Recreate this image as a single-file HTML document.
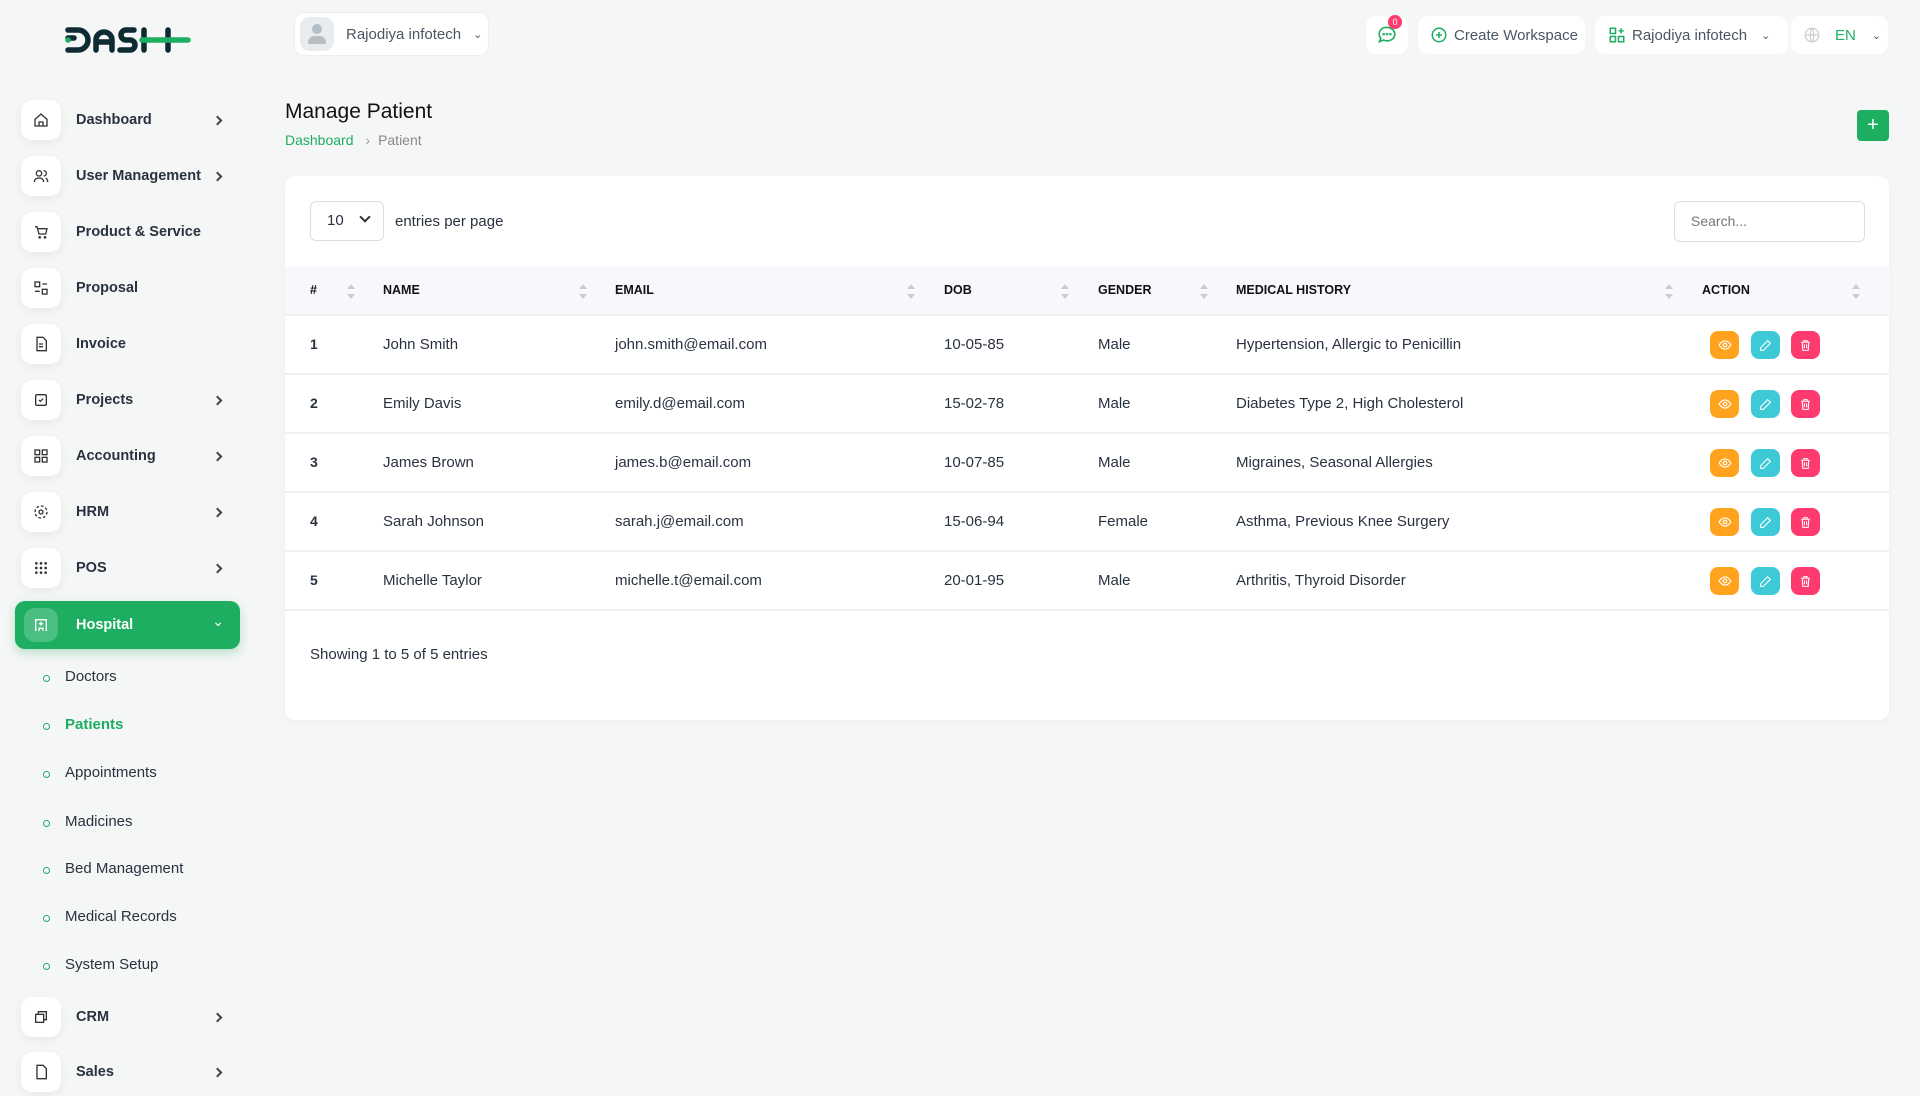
<!DOCTYPE html><html><head><meta charset="utf-8"><style>
*{box-sizing:border-box;margin:0;padding:0}
body{width:1920px;height:1080px;overflow:hidden;background:#f5f6f6;font-family:"Liberation Sans",sans-serif;color:#293240;position:relative}
.abs{position:absolute}
.logo{left:64px;top:24px}
.item{position:absolute;left:15px;width:225px;height:48px;display:flex;align-items:center}
.ic{width:40px;height:40px;border-radius:11px;background:#fff;box-shadow:0 3px 10px rgba(0,0,0,.06);display:flex;align-items:center;justify-content:center;margin-left:6px}
.item .t{margin-left:15px;font-size:14.5px;font-weight:bold;color:#293240}
.item .ch{position:absolute;right:19px;top:21px;width:7px;height:7px;border-right:2px solid #444;border-top:2px solid #444;transform:rotate(45deg)}
.act{background:#1eae62;border-radius:10px;box-shadow:0 4px 10px rgba(30,174,98,.3)}
.act .ic{background:rgba(255,255,255,.2);box-shadow:none;width:34px;height:34px;margin-left:9px}
.act .t{color:#fff;margin-left:18px}
.sub{position:absolute;left:65px;font-size:15px;color:#293240}
.sub:before{content:"";position:absolute;left:-22px;top:7px;width:5px;height:5px;border-radius:50%;border:1.5px solid #1eae62}
.btn{position:absolute;top:16px;height:38px;background:#fff;border-radius:10px;display:flex;align-items:center;font-size:15px;color:#4b5563}
.card{left:285px;top:176px;width:1604px;height:544px;background:#fff;border-radius:10px;box-shadow:0 2px 8px rgba(0,0,0,.03)}
.th{position:absolute;font-size:12.5px;font-weight:bold;color:#111;top:283px}
.srt{position:absolute;top:284px;width:8px;height:16px}
.srt:before{content:"";position:absolute;left:0;top:0;border:4px solid transparent;border-bottom:5px solid #ccc;border-top:0}
.srt:after{content:"";position:absolute;left:0;top:10px;border:4px solid transparent;border-top:5px solid #ccc;border-bottom:0}
.td{position:absolute;font-size:15px;color:#293240}
.ab{position:absolute;width:29px;height:28px;border-radius:8px;display:flex;align-items:center;justify-content:center}
.line{position:absolute;left:285px;width:1604px;height:2px;background:#eef0f2}
</style></head><body>
<svg class="abs logo" width="128" height="32" viewBox="0 0 128 32">
<path d="M4 14h6M4 6h10a10 10 0 0 1 0 20H4" fill="none" stroke="#0e2a33" stroke-width="5.5" stroke-linecap="round"/>
<circle cx="4" cy="16" r="2.8" fill="#1eae62"/>
<path d="M32 26V16a8 8 0 0 1 16 0v10M32 18h16" fill="none" stroke="#0e2a33" stroke-width="5.5" stroke-linecap="round"/>
<path d="M70 6h-8a5 5 0 0 0 0 10h4a5 5 0 0 1 0 10h-10" fill="none" stroke="#0e2a33" stroke-width="5.5" stroke-linecap="round"/>
<path d="M80 6v20M104 6v20" stroke="#0e2a33" stroke-width="5.5" stroke-linecap="round"/>
<path d="M78 16h46" stroke="#1eae62" stroke-width="5.5" stroke-linecap="round"/>
</svg>
<div class="btn" style="left:294px;top:12px;width:195px;height:44px;border:1px solid #eee;">
<div style="width:34px;height:34px;border-radius:10px;background:#e8ecee;margin-left:5px;position:relative"><div style="position:absolute;left:12px;top:7px;width:10px;height:10px;border-radius:50%;background:#b5bec4"></div><div style="position:absolute;left:8px;top:19px;width:18px;height:8px;border-radius:8px 8px 2px 2px;background:#b5bec4"></div></div>
<span style="margin-left:12px">Rajodiya infotech</span><span style="margin-left:12px;font-size:11px">&#8964;</span></div>

<div class="btn" style="left:1366px;width:42px;justify-content:center"><svg width="20" height="20" viewBox="0 0 24 24" fill="none" stroke="#1eae62" stroke-width="2"><path d="M12 3a9 8 0 1 1-4 15l-5 2 1.5-4A8 8 0 0 1 12 3z"/><circle cx="8" cy="11" r=".6"/><circle cx="12" cy="11" r=".6"/><circle cx="16" cy="11" r=".6"/></svg><div style="position:absolute;left:22px;top:-1px;width:14px;height:14px;border-radius:50%;background:#ff3a6e;color:#fff;font-size:9px;text-align:center;line-height:14px">0</div></div>
<div class="btn" style="left:1418px;width:167px"><svg style="margin-left:12px" width="18" height="18" viewBox="0 0 24 24" fill="none" stroke="#1eae62" stroke-width="2"><circle cx="12" cy="12" r="9"/><path d="M12 8v8M8 12h8"/></svg><span style="margin-left:6px">Create Workspace</span></div>
<div class="btn" style="left:1595px;width:193px"><svg style="margin-left:13px" width="18" height="18" viewBox="0 0 24 24" fill="none" stroke="#1eae62" stroke-width="2"><rect x="3" y="3" width="7" height="7"/><rect x="3" y="14" width="7" height="7"/><rect x="14" y="14" width="7" height="7"/><path d="M17.5 3v7M14 6.5h7"/></svg><span style="margin-left:6px">Rajodiya infotech</span><span style="margin-left:14px;font-size:11px">&#8964;</span></div>
<div class="btn" style="left:1791px;width:97px"><svg style="margin-left:12px" width="18" height="18" viewBox="0 0 24 24" fill="none" stroke="#ccc" stroke-width="1.6"><circle cx="12" cy="12" r="9"/><path d="M3 12h18M12 3c3 3 3 15 0 18M12 3c-3 3-3 15 0 18"/></svg><span style="margin-left:14px;color:#1eae62">EN</span><span style="margin-left:16px;font-size:11px">&#8964;</span></div>

<div class="abs" style="left:285px;top:100px;font-size:21px;color:#111">Manage Patient</div>
<div class="abs" style="left:285px;top:132px;font-size:14px;color:#1eae62">Dashboard <span style="color:#999;margin:0 8px">›</span><span style="color:#888">Patient</span></div>
<div class="abs" style="left:1857px;top:110px;width:32px;height:31px;background:#1eae62;border-radius:4px;color:#fff;font-size:20px;text-align:center;line-height:30px">+</div>

<div class="item" style="top:96px"><div class="ic"><svg width="16" height="16" viewBox="0 0 24 24" fill="none" stroke="#333" stroke-width="2"><path d="M3 11l9-8 9 8v10H3z M9 21v-6h6v6"/></svg></div><span class="t">Dashboard</span><i class="ch"></i></div>
<div class="item" style="top:152px"><div class="ic"><svg width="16" height="16" viewBox="0 0 24 24" fill="none" stroke="#333" stroke-width="2"><circle cx="9" cy="8" r="4"/><path d="M2 21c0-4 3-6 7-6s7 2 7 6M16 4a4 4 0 0 1 0 8M19 15c2 1 3 3 3 6"/></svg></div><span class="t">User Management</span><i class="ch"></i></div>
<div class="item" style="top:208px"><div class="ic"><svg width="16" height="16" viewBox="0 0 24 24" fill="none" stroke="#333" stroke-width="2"><path d="M3 4h3l3 11h10l2-8H7"/><circle cx="10" cy="20" r="1"/><circle cx="18" cy="20" r="1"/></svg></div><span class="t">Product &amp; Service</span></div>
<div class="item" style="top:264px"><div class="ic"><svg width="16" height="16" viewBox="0 0 24 24" fill="none" stroke="#333" stroke-width="2"><rect x="3" y="3" width="7" height="7"/><rect x="14" y="14" width="7" height="7"/><path d="M14 6h7M3 17h7"/></svg></div><span class="t">Proposal</span></div>
<div class="item" style="top:320px"><div class="ic"><svg width="16" height="16" viewBox="0 0 24 24" fill="none" stroke="#333" stroke-width="2"><path d="M6 2h9l5 5v15H6z M9 12h6M9 16h6"/></svg></div><span class="t">Invoice</span></div>
<div class="item" style="top:376px"><div class="ic"><svg width="16" height="16" viewBox="0 0 24 24" fill="none" stroke="#333" stroke-width="2"><rect x="4" y="4" width="16" height="16" rx="2"/><path d="M9 12l2 2 4-4"/></svg></div><span class="t">Projects</span><i class="ch"></i></div>
<div class="item" style="top:432px"><div class="ic"><svg width="16" height="16" viewBox="0 0 24 24" fill="none" stroke="#333" stroke-width="2"><rect x="3" y="3" width="7" height="7"/><rect x="14" y="3" width="7" height="7"/><rect x="3" y="14" width="7" height="7"/><rect x="14" y="14" width="7" height="7"/></svg></div><span class="t">Accounting</span><i class="ch"></i></div>
<div class="item" style="top:488px"><div class="ic"><svg width="16" height="16" viewBox="0 0 24 24" fill="none" stroke="#333" stroke-width="2"><circle cx="12" cy="12" r="3"/><circle cx="12" cy="12" r="9" stroke-dasharray="4 3"/></svg></div><span class="t">HRM</span><i class="ch"></i></div>
<div class="item" style="top:544px"><div class="ic"><svg width="16" height="16" viewBox="0 0 24 24" fill="#333"><circle cx="5" cy="5" r="2"/><circle cx="12" cy="5" r="2"/><circle cx="19" cy="5" r="2"/><circle cx="5" cy="12" r="2"/><circle cx="12" cy="12" r="2"/><circle cx="19" cy="12" r="2"/><circle cx="5" cy="19" r="2"/><circle cx="12" cy="19" r="2"/><circle cx="19" cy="19" r="2"/></svg></div><span class="t">POS</span><i class="ch"></i></div>
<div class="item act" style="top:601px"><div class="ic"><svg width="16" height="16" viewBox="0 0 24 24" fill="none" stroke="#fff" stroke-width="2"><path d="M4 21V4h16v17M9 21v-4h6v4M12 7v6M9 10h6"/></svg></div><span class="t">Hospital</span><span style="position:absolute;right:16px;top:12px;color:#fff;font-size:14px">&#8964;</span></div>
<div class="sub" style="top:668px">Doctors</div>
<div class="sub" style="top:716px;color:#1eae62;font-weight:bold">Patients</div>
<div class="sub" style="top:764px">Appointments</div>
<div class="sub" style="top:813px">Madicines</div>
<div class="sub" style="top:860px">Bed Management</div>
<div class="sub" style="top:908px">Medical Records</div>
<div class="sub" style="top:956px">System Setup</div>
<div class="item" style="top:993px"><div class="ic"><svg width="16" height="16" viewBox="0 0 24 24" fill="none" stroke="#333" stroke-width="2"><rect x="4" y="8" width="12" height="12"/><path d="M8 8V4h12v12h-4"/></svg></div><span class="t">CRM</span><i class="ch"></i></div>
<div class="item" style="top:1048px"><div class="ic"><svg width="16" height="16" viewBox="0 0 24 24" fill="none" stroke="#333" stroke-width="2"><path d="M6 2h9l5 5v15H6z"/></svg></div><span class="t">Sales</span><i class="ch"></i></div>

<div class="abs card"></div>
<div class="abs" style="left:310px;top:201px;width:74px;height:40px;border:1px solid #ddd;border-radius:6px;font-size:15px;line-height:38px;padding-left:16px">10<span style="position:absolute;right:14px;top:11px;width:8px;height:8px;border-right:2px solid #333;border-bottom:2px solid #333;transform:rotate(45deg)"></span></div>
<div class="abs" style="left:395px;top:213px;font-size:15px">entries per page</div>
<div class="abs" style="left:1674px;top:201px;width:191px;height:41px;border:1px solid #ddd;border-radius:6px;font-size:14px;line-height:39px;padding-left:16px;color:#777">Search...</div>
<div class="abs" style="left:285px;top:267px;width:1604px;height:48px;background:#f6f8fb"></div>
<div class="th" style="left:310px">#</div><i class="srt" style="left:347px"></i>
<div class="th" style="left:383px">NAME</div><i class="srt" style="left:579px"></i>
<div class="th" style="left:615px">EMAIL</div><i class="srt" style="left:907px"></i>
<div class="th" style="left:944px">DOB</div><i class="srt" style="left:1061px"></i>
<div class="th" style="left:1098px">GENDER</div><i class="srt" style="left:1200px"></i>
<div class="th" style="left:1236px">MEDICAL HISTORY</div><i class="srt" style="left:1665px"></i>
<div class="th" style="left:1702px">ACTION</div><i class="srt" style="left:1852px"></i>
<div class="line" style="top:314px"></div>
<div class="line" style="top:373px"></div>
<div class="line" style="top:432px"></div>
<div class="line" style="top:491px"></div>
<div class="line" style="top:550px"></div>
<div class="line" style="top:609px"></div>

<div id="rows"></div>
<div class="td" style="left:310px;top:646px">Showing 1 to 5 of 5 entries</div>
<script>
var d=[["1","John Smith","john.smith@email.com","10-05-85","Male","Hypertension, Allergic to Penicillin"],["2","Emily Davis","emily.d@email.com","15-02-78","Male","Diabetes Type 2, High Cholesterol"],["3","James Brown","james.b@email.com","10-07-85","Male","Migraines, Seasonal Allergies"],["4","Sarah Johnson","sarah.j@email.com","15-06-94","Female","Asthma, Previous Knee Surgery"],["5","Michelle Taylor","michelle.t@email.com","20-01-95","Male","Arthritis, Thyroid Disorder"]];
var xs=[310,383,615,944,1098,1236],h="";
var eye='<svg width="14" height="14" viewBox="0 0 24 24" fill="none" stroke="#fff" stroke-width="2"><path d="M2 12s4-7 10-7 10 7 10 7-4 7-10 7S2 12 2 12z"/><circle cx="12" cy="12" r="3"/></svg>';
var pen='<svg width="13" height="13" viewBox="0 0 24 24" fill="none" stroke="#fff" stroke-width="2"><path d="M16 3l5 5L8 21H3v-5z"/></svg>';
var bin='<svg width="13" height="13" viewBox="0 0 24 24" fill="none" stroke="#fff" stroke-width="2"><path d="M4 6h16M9 6V3h6v3M6 6l1 15h10l1-15M10 10v7M14 10v7"/></svg>';
d.forEach(function(r,i){var y=336+i*59;r.forEach(function(c,j){h+='<div class="td" style="left:'+xs[j]+'px;top:'+y+'px;'+(j==0?'font-weight:bold;font-size:14px':'')+'">'+c+'</div>'});
h+='<div class="ab" style="left:1710px;top:'+(y-5)+'px;background:#ffa21d">'+eye+'</div><div class="ab" style="left:1751px;top:'+(y-5)+'px;background:#3ec9d6">'+pen+'</div><div class="ab" style="left:1791px;top:'+(y-5)+'px;background:#ff3a6e">'+bin+'</div>';});
document.getElementById("rows").innerHTML=h;
</script>
</body></html>
